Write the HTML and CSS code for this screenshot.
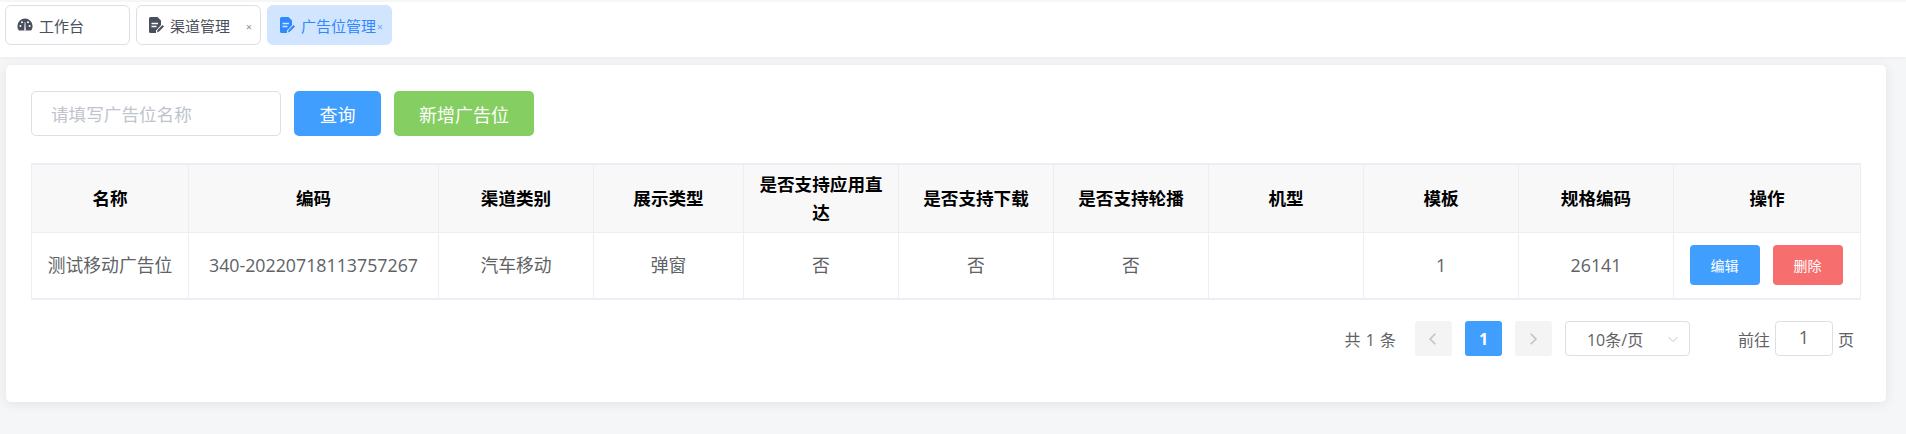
FILE: index.html
```html
<!DOCTYPE html>
<html lang="zh-CN">
<head>
<meta charset="utf-8">
<title>广告位管理</title>
<link rel="stylesheet" href="styles.css">
</head>
<body>
<nav class="tabs">
  <div class="tab">
    <svg class="tab-icon" viewBox="0 0 16 16"><path d="M8 1.500A7.600 7.600 0 0 0 .4 9c0 1.900.6 3.500 1.600 4.600h12c1-1.100 1.600-2.700 1.600-4.600A7.600 7.600 0 0 0 8 1.500Z" fill="currentColor"/><g fill="#fff"><circle cx="3.400" cy="9" r="1"/><circle cx="5" cy="5.300" r="1"/><circle cx="11" cy="5.300" r="1"/><circle cx="12.600" cy="9" r="1"/><path d="M7.200 13.400 7.700 5h.6l.5 8.400Z"/></g></svg>
    <span>工作台</span>
  </div>
  <div class="tab">
    <svg class="tab-icon" viewBox="0 0 16 16"><path d="M2.500 0h7L13 3.500V8l-5 5.500V16H2.500A1.500 1.500 0 0 1 1 14.500v-13A1.500 1.500 0 0 1 2.500 0Z" fill="currentColor"/><path d="M3.500 6.500h6.500M3.500 9.500h5" stroke="#fff" stroke-width="1.300"/><path d="m9 15.500.5-2.500 5-5 1.500 1.500-5 5Z" fill="currentColor"/></svg>
    <span>渠道管理</span>
    <span class="tab-close">×</span>
  </div>
  <div class="tab tab-active">
    <svg class="tab-icon" viewBox="0 0 16 16"><path d="M2.500 0h7L13 3.500V8l-5 5.500V16H2.500A1.500 1.500 0 0 1 1 14.500v-13A1.500 1.500 0 0 1 2.500 0Z" fill="currentColor"/><path d="M3.500 6.500h6.500M3.500 9.500h5" stroke="#d2e5ff" stroke-width="1.300"/><path d="m9 15.500.5-2.500 5-5 1.500 1.500-5 5Z" fill="currentColor"/></svg>
    <span>广告位管理</span>
    <span class="tab-close">×</span>
  </div>
</nav>
<main class="page">
  <section class="card">
    <div class="toolbar">
      <input class="search" type="text" placeholder="请填写广告位名称">
      <button class="btn btn-blue btn-query">查询</button>
      <button class="btn btn-green btn-add">新增广告位</button>
    </div>
    <table class="grid">
      <colgroup>
        <col class="c-name"><col class="c-code"><col class="c-m"><col class="c-s">
        <col class="c-m"><col class="c-m"><col class="c-m"><col class="c-m"><col class="c-m"><col class="c-m"><col class="c-op">
      </colgroup>
      <thead>
        <tr>
          <th>名称</th><th>编码</th><th>渠道类别</th><th>展示类型</th><th>是否支持应用直达</th><th>是否支持下载</th><th>是否支持轮播</th><th>机型</th><th>模板</th><th>规格编码</th><th>操作</th>
        </tr>
      </thead>
      <tbody>
        <tr>
          <td>测试移动广告位</td><td>340-20220718113757267</td><td>汽车移动</td><td>弹窗</td><td>否</td><td>否</td><td>否</td><td></td><td>1</td><td>26141</td>
          <td><div class="ops"><button class="btn-small btn-blue">编辑</button><button class="btn-small btn-red">删除</button></div></td>
        </tr>
      </tbody>
    </table>
    <div class="pager">
      <span class="total">共 1 条</span>
      <button class="pg pg-off"><svg viewBox="0 0 12 12" class="chev"><path d="M8 1.500 3.500 6 8 10.500" fill="none" stroke="currentColor" stroke-width="1.500"/></svg></button>
      <button class="pg pg-on">1</button>
      <button class="pg pg-off"><svg viewBox="0 0 12 12" class="chev"><path d="M4 1.500 8.500 6 4 10.500" fill="none" stroke="currentColor" stroke-width="1.500"/></svg></button>
      <div class="size"><span>10条/页</span><svg viewBox="0 0 12 12" class="size-arrow"><path d="M1.500 4 6 8.500 10.500 4" fill="none" stroke="currentColor"/></svg></div>
      <span class="goto">前往</span>
      <div class="jump">1</div>
      <span class="unit">页</span>
    </div>
  </section>
</main>
</body>
</html>
```
FILE: styles.css
```css
* { box-sizing: border-box; }
html, body { margin: 0; height: 100%; }
body {
  background: #f5f6f8;
  font-family: "Open Sans", "Noto Sans CJK SC", sans-serif;
  color: #606266;
  overflow: hidden;
}
.tabs {
  display: flex;
  gap: 6px;
  height: 57px;
  padding: 3px 0 0 5px;
  background: #fff;
  border-top: 2px solid #f5f6f8;
  box-shadow: 0 1px 4px rgba(0, 21, 41, .05);
  position: relative;
}
.tab {
  display: flex;
  align-items: center;
  width: 125px;
  height: 40px;
  padding-left: 11px;
  border: 1px solid #dcdfe6;
  border-radius: 6px;
  font-size: 15px;
  color: #4a4f5c;
  position: relative;
  background: #fff;
}
.tab-active {
  background: #d2e5ff;
  border-color: #d2e5ff;
  color: #2f88ff;
}
.tab-icon { width: 16px; height: 16px; margin-right: 6px; flex: none; }
.tab-close {
  position: absolute;
  right: 8px;
  top: 12px;
  font-size: 11px;
  line-height: 18px;
  color: #8a8f99;
}
.tab-active .tab-close { color: #6aa8f5; }
.page { padding: 8px 20px 0 6px; }
.card {
  height: 337px;
  padding: 26px 25px 0;
  background: #fff;
  border-radius: 5px;
  box-shadow: 0 2px 12px rgba(0, 0, 0, .08);
}
.toolbar { display: flex; align-items: center; height: 45px; }
.search {
  width: 250px;
  height: 45px;
  padding: 0 19px;
  border: 1px solid #dcdfe6;
  border-radius: 5px;
  font: 17.6px "Noto Sans CJK SC", sans-serif;
  color: #606266;
  outline: none;
}
.search::placeholder { color: #c0c4cc; opacity: 1; }
.btn {
  height: 45px;
  border: 0;
  border-radius: 5px;
  color: #fff;
  font: 18px "Noto Sans CJK SC", sans-serif;
  padding: 0;
}
.btn-query { width: 87px; margin-left: 13px; }
.btn-add { width: 140px; margin-left: 13px; }
.btn-blue { background: #409eff; }
.btn-green { background: #85ce61; }
.btn-red { background: #f76e6e; }
.grid {
  width: 1829px;
  margin-top: 27px;
  table-layout: fixed;
  border-collapse: collapse;
  border-top: 2px solid #ebeef5;
  border-bottom: 2px solid #ebeef5;
  border-left: 1px solid #ebeef5;
  border-right: 1px solid #ebeef5;
}
.c-name { width: 157px; }
.c-code { width: 250px; }
.c-m { width: 155px; }
.c-s { width: 150px; }
.c-op { width: 187px; }
th, td {
  border: 1px solid #ebeef5;
  border-top: 0;
  border-bottom: 0;
  text-align: center;
  padding: 0 15px;
  font-size: 17.8px;
}
th {
  height: 68px;
  background: #f8f8f9;
  color: #000;
  font-size: 17.6px;
  font-weight: 700;
  line-height: 28px;
  border-bottom: 1px solid #ebeef5;
  padding: 0 12px;
}
td { height: 67px; color: #606266; line-height: 24px; }
.ops { display: flex; justify-content: center; gap: 13px; padding-right: 2px; }
.btn-small {
  width: 70px;
  height: 40px;
  padding: 0;
  border: 0;
  border-radius: 4px;
  color: #fff;
  font: 14px "Noto Sans CJK SC", sans-serif;
}
.pager {
  display: flex;
  align-items: center;
  justify-content: flex-end;
  height: 35px;
  margin-top: 21px;
  font-size: 16px;
  color: #606266;
  padding-right: 7px;
}
.total { margin-right: 19px; word-spacing: 1px; }
.pg {
  width: 37px;
  height: 35px;
  padding: 0;
  border: 0;
  border-radius: 3px;
  margin-right: 13px;
  background: #f4f4f5;
  color: #c0c4cc;
  font: 700 16px "Open Sans", sans-serif;
  display: flex;
  align-items: center;
  justify-content: center;
}
.pg-on { background: #409eff; color: #fff; }
.chev { width: 14px; height: 14px; }
.size {
  display: flex;
  align-items: center;
  justify-content: space-between;
  width: 125px;
  height: 35px;
  padding: 0 10px 0 21px;
  border: 1px solid #dcdfe6;
  border-radius: 4px;
  margin-right: 48px;
}
.size-arrow { width: 12px; height: 12px; color: #c0c4cc; }
.jump {
  width: 58px;
  height: 35px;
  margin: 0 5px;
  border: 1px solid #dcdfe6;
  border-radius: 4px;
  text-align: center;
  line-height: 31px;
  font-size: 18px;
}
```
